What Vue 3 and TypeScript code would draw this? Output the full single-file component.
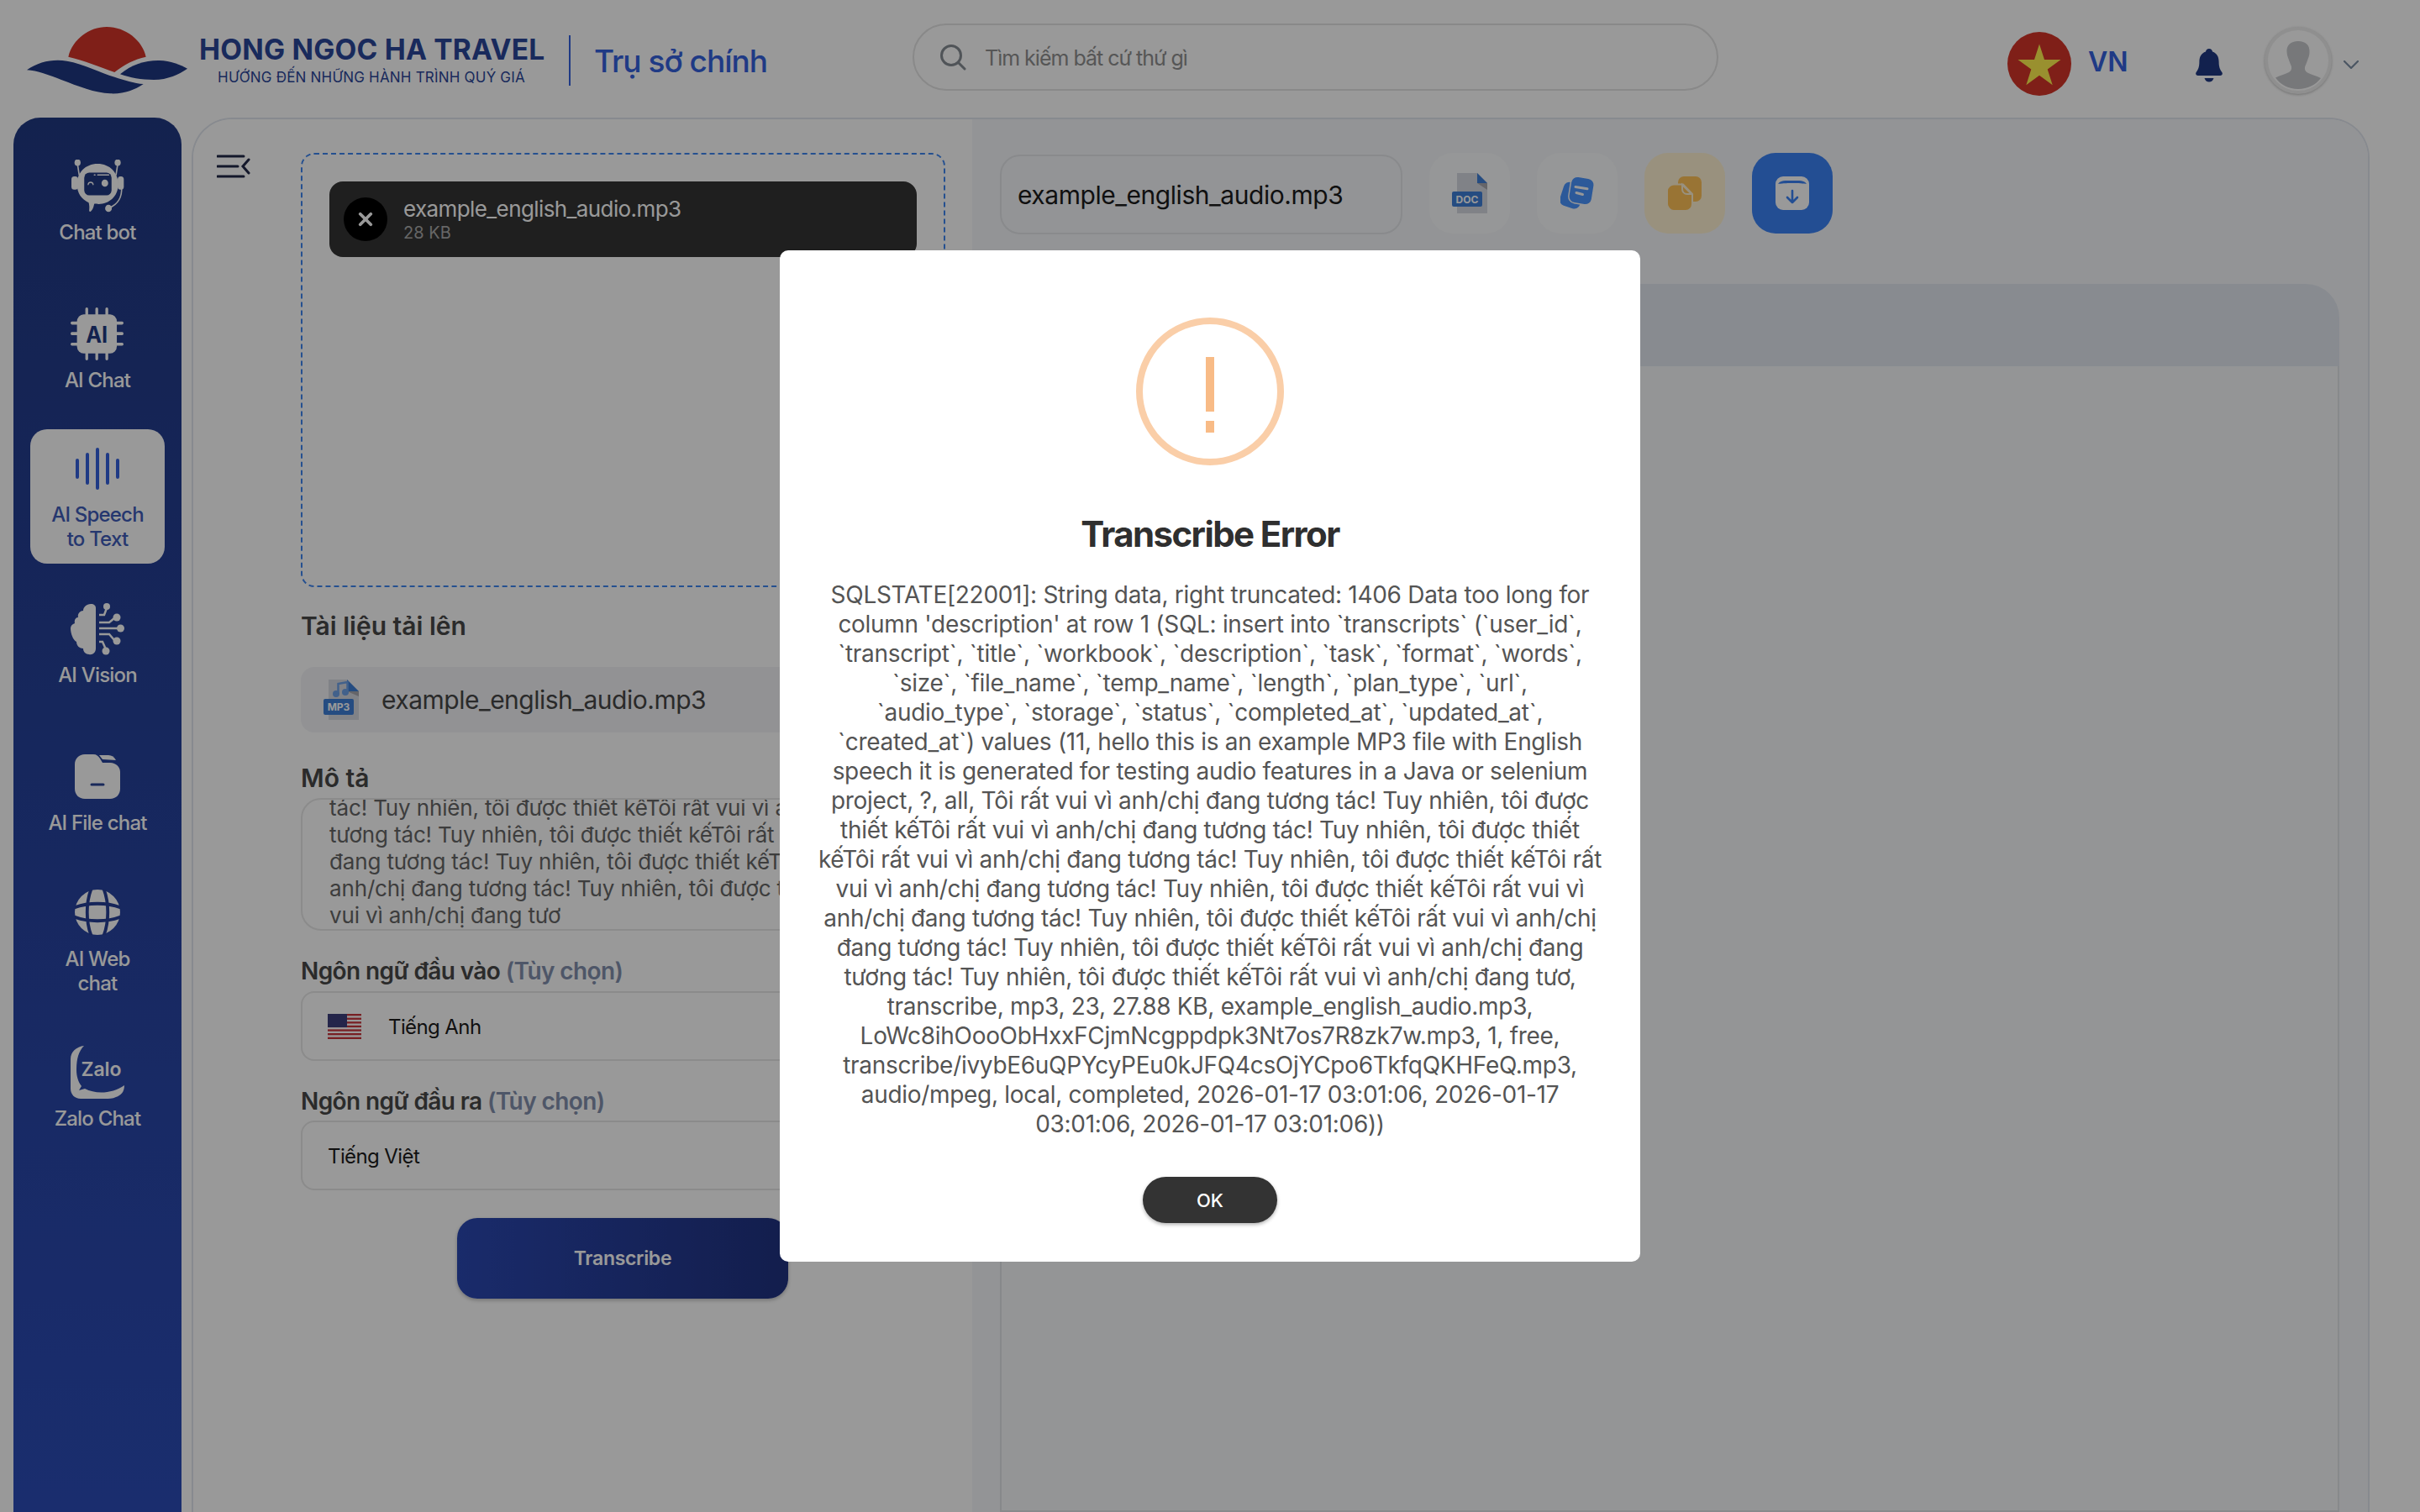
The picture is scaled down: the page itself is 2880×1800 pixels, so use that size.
<script setup lang="ts">
const errorLines: string[] = [
  "SQLSTATE[22001]: String data, right truncated: 1406 Data too long for",
  "column 'description' at row 1 (SQL: insert into `transcripts` (`user_id`,",
  "`transcript`, `title`, `workbook`, `description`, `task`, `format`, `words`,",
  "`size`, `file_name`, `temp_name`, `length`, `plan_type`, `url`,",
  "`audio_type`, `storage`, `status`, `completed_at`, `updated_at`,",
  "`created_at`) values (11, hello this is an example MP3 file with English",
  "speech it is generated for testing audio features in a Java or selenium",
  "project, ?, all, Tôi rất vui vì anh/chị đang tương tác! Tuy nhiên, tôi được",
  "thiết kếTôi rất vui vì anh/chị đang tương tác! Tuy nhiên, tôi được thiết",
  "kếTôi rất vui vì anh/chị đang tương tác! Tuy nhiên, tôi được thiết kếTôi rất",
  "vui vì anh/chị đang tương tác! Tuy nhiên, tôi được thiết kếTôi rất vui vì",
  "anh/chị đang tương tác! Tuy nhiên, tôi được thiết kếTôi rất vui vì anh/chị",
  "đang tương tác! Tuy nhiên, tôi được thiết kếTôi rất vui vì anh/chị đang",
  "tương tác! Tuy nhiên, tôi được thiết kếTôi rất vui vì anh/chị đang tươ,",
  "transcribe, mp3, 23, 27.88 KB, example_english_audio.mp3,",
  "LoWc8ihOooObHxxFCjmNcgppdpk3Nt7os7R8zk7w.mp3, 1, free,",
  "transcribe/ivybE6uQPYcyPEu0kJFQ4csOjYCpo6TkfqQKHFeQ.mp3,",
  "audio/mpeg, local, completed, 2026-01-17 03:01:06, 2026-01-17",
  "03:01:06, 2026-01-17 03:01:06))",
];

const descLines: string[] = [
  "tác! Tuy nhiên, tôi được thiết kếTôi rất vui vì anh/chị đang",
  "tương tác! Tuy nhiên, tôi được thiết kếTôi rất vui vì anh/chị",
  "đang tương tác! Tuy nhiên, tôi được thiết kếTôi rất vui vì",
  "anh/chị đang tương tác! Tuy nhiên, tôi được thiết kếTôi rất",
  "vui vì anh/chị đang tươ",
];
</script>

<template>
  <div class="page">
    <header class="header">
      <div class="brand">
        <svg class="logo" viewBox="37 36 573 240">
          <path fill="#d43528" d="M185 143C200 80 260 36 322 36C390 36 450 85 462 143C420 152 385 170 350 198C300 180 240 155 185 143Z" />
          <path fill="#1e3782" d="M37 190C80 160 130 150 180 158C240 168 300 200 350 215C385 226 420 238 453 240C420 262 385 276 335 274C280 272 220 248 160 225C115 208 75 192 37 190Z" />
          <path fill="#1e3782" d="M370 205C410 170 460 155 510 156C550 157 585 172 610 185C580 205 540 225 490 225C445 225 405 218 370 205Z" />
        </svg>
        <div class="brand-text">
          <div class="brand-name">HONG NGOC HA TRAVEL</div>
          <div class="brand-tag">HƯỚNG ĐẾN NHỮNG HÀNH TRÌNH QUÝ GIÁ</div>
        </div>
        <div class="brand-div"></div>
        <div class="brand-site">Trụ sở chính</div>
      </div>
      <div class="search">
        <svg class="search-ico" viewBox="0 0 32 32" fill="none" stroke="#858c93" stroke-width="3" stroke-linecap="round">
          <circle cx="14" cy="14" r="11.5" />
          <path d="M23 23l7 7" />
        </svg>
        <span class="search-txt">Tìm kiếm bất cứ thứ gì</span>
      </div>
      <div class="hdr-right">
        <svg class="flag" viewBox="0 0 76 76">
          <circle cx="38" cy="38" r="38" fill="#d43528" />
          <path fill="#fff04f" d="M38 14.5l6 18.6h19.5L47.7 44.6l6 18.6L38 51.7 22.3 63.2l6-18.6L12.5 33.1H32z" />
        </svg>
        <span class="vn">VN</span>
        <svg class="bell" viewBox="0 0 32 40">
          <path fill="#1e3782" d="M16 0c2.4 0 3.6 1.4 4 3.4C25.6 5.2 27.6 10 27.6 15.6c0 6.2 1.4 9.4 3.6 12.2 1.4 1.8.4 4.2-2 4.2H2.8c-2.4 0-3.4-2.4-2-4.2 2.2-2.8 3.6-6 3.6-12.2C4.4 10 6.4 5.2 12 3.4 12.4 1.4 13.6 0 16 0z" />
          <path fill="#1e3782" d="M10.5 35h11c-.8 3-3 4.6-5.500 4.600S11.300 38 10.500 35z" />
        </svg>
        <div class="avatar">
          <svg viewBox="0 0 72 72">
            <path fill="#c6c8cc" d="M36 13c9 0 14 5 13.500 13 0 4-1.500 7-2.500 10-1 3-2.500 6-3 8-.5 3 .5 5 3 6.500 4 2 10 3.500 16 6.500C57 65 47 70 36 70S15 65 9 56.500c6-3 12-4.500 16-6.500 2.500-1.500 3.500-3.500 3-6.500-.5-2-2-5-3-8-1-3-2.500-6-2.500-10C22 18 27 13 36 13z" />
          </svg>
        </div>
        <svg class="chev" viewBox="0 0 18 10" fill="none" stroke="#7d8fa5" stroke-width="2.200" stroke-linecap="round" stroke-linejoin="round">
          <path d="M1 1l8 8 8-8" />
        </svg>
      </div>
    </header>

    <div class="body">
      <nav class="sidebar">
        <div class="item n1">
          <svg class="ico i-bot" viewBox="252 112 190 176" preserveAspectRatio="none">
            <circle cx="274" cy="122" r="11" fill="#fff" />
            <circle cx="418" cy="122" r="11" fill="#fff" />
            <path fill="none" stroke="#fff" stroke-width="5" d="M274 128l6 36M418 128l-6 36M432 205c2 30-12 56-45 68" />
            <circle cx="385" cy="274" r="12" fill="#fff" />
            <rect x="252" y="168" width="24" height="44" rx="10" fill="#fff" />
            <rect x="418" y="168" width="22" height="44" rx="10" fill="#fff" />
            <path fill="#fff" d="M346 126c44 0 74 30 74 68 0 42-34 66-70 66-6 0-12 0-16-1-2 10-6 22-14 26-4 1-5-3-4-8 1-7 0-15-2-22-26-10-42-32-42-61 0-38 30-68 74-68z" />
            <rect x="298" y="155" width="98" height="76" rx="18" fill="#213983" />
            <path fill="none" stroke="#fff" stroke-width="4" stroke-linecap="round" d="M312 195c2-10 16-10 18 0M334 163h3M346 163h40" />
            <circle cx="372" cy="190" r="12" fill="#fff" />
          </svg>
          <span class="lbl">Chat bot</span>
        </div>

        <div class="item n2">
          <svg class="ico i-ai" viewBox="252 605 190 176" preserveAspectRatio="none">
            <g stroke="#fff" stroke-width="10" stroke-linecap="round">
              <path d="M310 610v25M346 610v25M382 610v25M310 750v26M346 750v26M382 750v26M257 657h25M257 692h25M257 727h25M412 657h25M412 692h25M412 727h25" />
            </g>
            <rect x="275" y="628" width="143" height="130" rx="24" fill="#fff" />
            <text x="346" y="721" text-anchor="middle" class="ai-txt">AI</text>
          </svg>
          <span class="lbl">AI Chat</span>
        </div>

        <div class="item active n3">
          <svg class="ico i-wave" viewBox="0 0 52 50" fill="none" stroke="#3461de" stroke-width="4" stroke-linecap="round">
            <path d="M2 15v20M14 8v34M26 2v46M38 8v34M50 15v20" />
          </svg>
          <span class="lbl">AI Speech<br />to Text</span>
        </div>

        <div class="item n4">
          <svg class="ico i-brain" viewBox="0 0 64 62">
            <path fill="#fff" d="M24 1C28 1 30 3 30 6V54C30 59 26 62 22 61C18 61 15 58 15 54C11 54 7 51 7 46C3 44 0 36 0 30C0 27 2 25 5 24C4 20 6 17 9 17C8 13 11 9 15 9C15 5 19 1 24 1Z" />
            <g fill="none" stroke="#fff" stroke-width="2.500">
              <path d="M34 14H40L43 6M34 23H46L52 18M34 30H58M34 37H46L52 44M34 46H38L42 55" />
            </g>
            <g fill="#fff">
              <circle cx="43" cy="4" r="4" /><circle cx="55" cy="17" r="4.500" /><circle cx="59.500" cy="30" r="4.500" />
              <circle cx="55" cy="45" r="4.500" /><circle cx="42" cy="57" r="4.500" />
            </g>
          </svg>
          <span class="lbl">AI Vision</span>
        </div>

        <div class="item n5">
          <svg class="ico i-folder" viewBox="0 0 54 53">
            <path fill="#fff" d="M0 12C0 5 5 0 12 0H22C26 0 28 2 30 5L33 10H42C49 10 54 15 54 21V41C54 48 49 53 42 53H12C5 53 0 48 0 41Z" />
            <path fill="#fff" d="M29 1H40C44 1 47 3 49 7L33 6Z" />
            <path stroke="#2a4597" stroke-width="3" stroke-linecap="round" fill="none" d="M20 36h14" />
          </svg>
          <span class="lbl">AI File chat</span>
        </div>

        <div class="item n6">
          <svg class="ico i-globe" viewBox="0 0 54 54">
            <circle cx="27" cy="27" r="27" fill="#fff" />
            <g fill="none" stroke="#263f96" stroke-width="3.800">
              <path d="M-2 22C15 15 39 15 56 22M-2 32C15 39 39 39 56 32" />
              <path d="M20 -2C13 15 13 39 20 56M34 -2C41 15 41 39 34 56" />
            </g>
          </svg>
          <span class="lbl">AI Web<br />chat</span>
        </div>

        <div class="item n7">
          <svg class="ico i-zalo" viewBox="0 0 64 65">
            <path fill="#fff" d="M16 1C9 8 7 18 7 30C7 37 9 44 13 49L10 54L17 52C30 59 50 58 64 48C64 56 60 60 54 62C50 64 46 64 40 64H12C5 64 0 59 0 52V17C0 8 7 2 16 1Z" />
            <text x="36.500" y="37" text-anchor="middle" class="zalo-txt">Zalo</text>
          </svg>
          <span class="lbl">Zalo Chat</span>
        </div>
      </nav>

      <main class="main">
        <section class="left">
          <svg class="menu" viewBox="0 0 40 28" fill="none" stroke="#222848" stroke-width="3" stroke-linecap="round">
            <path d="M1 2h31M1 14h24M1 26h31M38 6l-7 8 7 8" />
          </svg>
          <div class="form">
            <div class="drop">
              <div class="chip">
                <span class="chip-x">
                  <svg viewBox="0 0 16 16" fill="none" stroke="#fff" stroke-width="3" stroke-linecap="round"><path d="M3 3l10 10M13 3L3 13" /></svg>
                </span>
                <div class="chip-text">
                  <div class="chip-name">example_english_audio.mp3</div>
                  <div class="chip-size">28 KB</div>
                </div>
              </div>
            </div>

            <div class="label l-up">Tài liệu tải lên</div>
            <div class="upload">
              <svg class="mp3" viewBox="0 0 42 48">
                <path fill="#d5d9e2" d="M6 0h22l14 14v34H6z" />
                <path fill="#3f7fd8" d="M28 0l14 14H28z" />
                <path fill="#a9a9b0" d="M28 14h14v6z" />
                <circle cx="15" cy="17" r="4" fill="#6ea2e8" /><circle cx="26" cy="15" r="4" fill="#6ea2e8" />
                <path d="M17.500 17V5l11-2v12" fill="none" stroke="#6ea2e8" stroke-width="2.500" />
                <rect x="0" y="23" width="36" height="19" rx="2" fill="#3f7fd8" />
                <text x="18" y="37" text-anchor="middle" class="mp3-txt">MP3</text>
              </svg>
              <span class="upload-name">example_english_audio.mp3</span>
            </div>

            <div class="label l-desc">Mô tả</div>
            <div class="desc">
              <div class="desc-inner">
                <div v-for="(l, i) in descLines" :key="i">{{ l }}</div>
              </div>
            </div>

            <div class="label lang l-in">Ngôn ngữ đầu vào <span class="opt">(Tùy chọn)</span></div>
            <div class="select s-in">
              <svg class="us" viewBox="0 0 40 30">
                <rect width="40" height="30" fill="#fff" />
                <g fill="#c9363c">
                  <rect width="40" height="2.300" y="0" /><rect width="40" height="2.300" y="4.600" /><rect width="40" height="2.300" y="9.200" />
                  <rect width="40" height="2.300" y="13.800" /><rect width="40" height="2.300" y="18.400" /><rect width="40" height="2.300" y="23" /><rect width="40" height="2.300" y="27.700" />
                </g>
                <rect width="23" height="16" fill="#3c3f7c" />
              </svg>
              <span class="sel-txt">Tiếng Anh</span>
            </div>

            <div class="label lang l-out">Ngôn ngữ đầu ra <span class="opt">(Tùy chọn)</span></div>
            <div class="select s-out"><span class="sel-txt plain">Tiếng Việt</span></div>

            <button class="go" type="button">Transcribe</button>
          </div>
        </section>

        <section class="right">
          <div class="toolbar">
            <div class="fname">example_english_audio.mp3</div>
            <div class="tbtn neutral">
              <svg class="t-doc" viewBox="0 0 42 48">
                <path fill="#d5d9e2" d="M6 0h24l12 12v36H6z" />
                <path fill="#3f7fd8" d="M30 0l12 12H30z" />
                <path fill="#a9a9b0" d="M30 12h12v8z" />
                <rect x="0" y="22" width="36" height="18" rx="2" fill="#3f7fd8" />
                <text x="18" y="35.500" text-anchor="middle" class="doc-txt">DOC</text>
              </svg>
            </div>
            <div class="tbtn neutral">
              <svg class="t-note" viewBox="0 0 40 40">
                <g transform="rotate(18 13 23)"><rect x="1" y="8" width="25" height="29" rx="7" fill="#4a94ff" /></g>
                <g transform="rotate(9 25 17)"><rect x="11" y="1" width="28" height="32" rx="8" fill="#4a94ff" stroke="#fbfcfd" stroke-width="1.500" /></g>
                <path stroke="#fbfcfd" stroke-width="3" stroke-linecap="round" d="M18 12.500l14 2.200M19 19.500l7.500 2" />
              </svg>
            </div>
            <div class="tbtn warm">
              <svg class="t-copy" viewBox="0 0 40 40">
                <rect x="12" y="0" width="28" height="30" rx="7" fill="#ffc157" />
                <path fill="#ffc157" stroke="#fff2d2" stroke-width="2" d="M7 9.500H18L29 21V33C29 37 26 41 21 41H7C3 41 -1 37 -1 33V17C-1 13 3 9.500 7 9.500Z" />
                <path fill="#ffc157" stroke="#fff2d2" stroke-width="2" d="M17 10V15C17 18 19 21 23 21H28Z" />
              </svg>
            </div>
            <div class="tbtn blue">
              <svg class="t-save" viewBox="0 0 40 40">
                <rect x="0" y="0" width="40" height="40" rx="9" fill="#fff" />
                <path fill="#3b82f6" d="M3 9c2-3 5-4 9-4h16c4 0 7 1 9 4-6-1.500-28-1.500-34 0z" />
                <path fill="none" stroke="#3b82f6" stroke-width="2.600" stroke-linecap="round" stroke-linejoin="round" d="M20 17v14M14 25l6 6 6-6" />
              </svg>
            </div>
          </div>
          <div class="card">
            <div class="card-head"></div>
            <div class="card-body"></div>
          </div>
        </section>
      </main>
    </div>

    <div class="overlay">
      <div class="modal">
        <div class="warn">
          <span class="warn-bar"></span>
          <span class="warn-dot"></span>
        </div>
        <h2 class="m-title">Transcribe Error</h2>
        <div class="m-text">
          <div v-for="(l, i) in errorLines" :key="i" class="m-line">{{ l }}</div>
        </div>
        <button class="ok" type="button">OK</button>
      </div>
    </div>
  </div>
</template>

<style>
html, body { margin: 0; padding: 0; background: #fff; overflow: hidden; }
</style>

<style scoped>
.page {
  position: relative;
  width: 2880px;
  height: 1800px;
  overflow: hidden;
  background: #fff;
  font-family: Inter, "Noto Sans", sans-serif;
  display: flex;
  flex-direction: column;
}

/* header */
.header { height: 140px; flex: none; display: flex; align-items: flex-start; padding-left: 32px; box-sizing: border-box; }
.brand { width: 1054px; flex: none; display: flex; align-items: flex-start; padding-top: 32px; box-sizing: border-box; height: 140px; }
.logo { width: 191px; height: 80px; flex: none; }
.brand-text { width: 410px; margin-left: 14px; flex: none; margin-top: 8px; text-align: center; }
.brand-name { font-size: 33.5px; line-height: 38px; font-weight: 700; letter-spacing: .2px; color: #2b4699; white-space: nowrap; text-align: left; }
.brand-tag { font-size: 17px; line-height: 22px; margin-top: 3px; letter-spacing: .2px; color: #2b4699; white-space: nowrap; }
.brand-div { width: 2px; height: 60px; margin: 10px 0 0 30px; background: #3461de; flex: none; }
.brand-site { margin: 17px 0 0 28px; font-size: 37px; line-height: 48px; font-weight: 500; letter-spacing: -1px; color: #3461de; white-space: nowrap; }

.search { width: 959px; height: 80px; margin-top: 28px; flex: none; box-sizing: border-box; border: 2px solid #e4e4e4; border-radius: 40px; display: flex; align-items: center; padding-left: 30px; }
.search-ico { width: 32px; height: 32px; flex: none; }
.search-txt { margin-left: 22px; margin-top: 2px; font-size: 25px; letter-spacing: -1px; color: #8f8f8f; white-space: nowrap; }

.hdr-right { display: flex; align-items: flex-start; margin-left: 344px; }
.flag { width: 76px; height: 76px; margin-top: 38px; flex: none; }
.vn { margin: 54px 0 0 20px; font-size: 32px; line-height: 40px; font-weight: 600; color: #3461de; width: 48px; flex: none; }
.bell { width: 32px; height: 40px; margin: 58px 0 0 80px; flex: none; }
.avatar { width: 80px; height: 80px; margin: 32px 0 0 50px; flex: none; box-sizing: border-box; border: 4px solid #eeeeee; border-radius: 50%; overflow: hidden; box-shadow: 0 1px 3px rgba(0,0,0,.25); background: #fff; }
.avatar svg { width: 72px; height: 72px; display: block; }
.chev { width: 18px; height: 10px; margin: 72px 0 0 14px; flex: none; }

/* layout body */
.body { flex: 1; display: flex; min-height: 0; }

/* sidebar */
.sidebar { width: 200px; margin-left: 16px; flex: none; box-sizing: border-box; border-radius: 32px 32px 0 0; background: linear-gradient(180deg, #213983 0%, #2c4cb8 100%); display: flex; flex-direction: column; align-items: center; padding-top: 50px; }
.item { display: flex; flex-direction: column; align-items: center; color: #fff; flex: none; }
.ico { display: block; flex: none; }
.lbl { font-size: 24px; line-height: 28px; font-weight: 500; text-align: center; white-space: nowrap; letter-spacing: -.8px; margin-top: 10px; }
.i-bot { width: 63px; height: 63px; }
.i-ai { width: 63px; height: 63px; }
.i-wave { width: 52px; height: 50px; }
.i-brain { width: 64px; height: 62px; }
.i-folder { width: 54px; height: 53px; }
.i-globe { width: 54px; height: 54px; }
.i-zalo { width: 64px; height: 65px; }
.n2 { margin-top: 75px; }
.n3 { margin-top: 44px; }
.n4 { margin-top: 47px; }
.n5 { margin-top: 80px; }
.n5 .lbl { margin-top: 15px; }
.n6 { margin-top: 65px; }
.n6 .lbl { margin-top: 14px; line-height: 29px; }
.n7 { margin-top: 59px; }
.n7 .lbl { margin-top: 9px; }
.active { width: 160px; height: 160px; box-sizing: border-box; background: #fff; border-radius: 20px; padding-top: 22px; color: #3e5db9; }
.active .lbl { line-height: 29px; margin-top: 15px; }
.ai-txt { font: 700 76px Inter, sans-serif; fill: #213983; }
.zalo-txt { font: 600 23px Inter, sans-serif; fill: #fff; }

/* main panel */
.main { width: 2592px; margin-left: 12px; flex: none; box-sizing: border-box; border: 2px solid #e2e6ee; border-bottom: 0; border-radius: 48px 48px 0 0; display: flex; overflow: hidden; }
.left { width: 927px; flex: none; background: #fff; display: flex; box-sizing: border-box; }
.menu { width: 40px; height: 28px; margin: 42px 0 0 28px; flex: none; }
.form { width: 767px; margin-left: 60px; padding-top: 40px; flex: none; }
.drop { height: 517px; box-sizing: border-box; border: 2px dashed #3f86f0; border-radius: 16px; padding: 32px; }
.chip { height: 90px; width: 699px; box-sizing: border-box; border-radius: 16px; background: #343434; display: flex; align-items: center; padding-left: 17px; }
.chip-x { width: 52px; height: 52px; border-radius: 50%; background: #000; display: flex; align-items: center; justify-content: center; flex: none; }
.chip-x svg { width: 20px; height: 20px; }
.chip-text { margin-left: 19px; }
.chip-name { font-size: 26px; line-height: 32px; letter-spacing: -.6px; color: #fff; white-space: nowrap; }
.chip-size { font-size: 20px; line-height: 24px; color: #aaaaaa; }

.label { font-size: 30px; line-height: 36px; font-weight: 600; color: #484848; white-space: nowrap; }
.lang { font-size: 28px; letter-spacing: -.6px; }
.opt { color: #8390ad; }
.l-up { margin-top: 28px; }
.upload { margin-top: 31px; height: 78px; border-radius: 16px; background: #f3f4f7; display: flex; align-items: center; padding-left: 27px; }
.mp3 { width: 42px; height: 48px; flex: none; }
.upload-name { margin-left: 27px; font-size: 30px; letter-spacing: -.5px; color: #474747; white-space: nowrap; }
.mp3-txt { font: 700 12px Inter, sans-serif; fill: #fff; }
.l-desc { margin-top: 36px; }
.desc { margin-top: 6px; height: 158px; box-sizing: border-box; border: 2px solid #e8e8e8; border-radius: 24px; overflow: hidden; padding: 0 32px; }
.desc-inner { margin-top: -6px; font-size: 26px; line-height: 32px; letter-spacing: -.15px; color: #666; white-space: nowrap; }
.l-in { margin-top: 30px; }
.select { height: 83px; box-sizing: border-box; border: 2px solid #e8e8e8; border-radius: 16px; display: flex; align-items: center; padding-left: 30px; }
.s-in { margin-top: 6px; }
.l-out { margin-top: 30px; }
.s-out { margin-top: 5px; }
.us { width: 40px; height: 30px; flex: none; }
.sel-txt { margin-left: 32px; margin-top: 2px; font-size: 24px; letter-spacing: -.6px; color: #1c1c1c; white-space: nowrap; }
.sel-txt.plain { margin-left: 0; }
.go { display: block; margin: 33px 0 0 186px; width: 394px; height: 96px; border: 0; border-radius: 24px; background: linear-gradient(90deg, #2b48b2, #203280); color: #fff; font: 600 23px Inter, sans-serif; letter-spacing: -.3px; box-shadow: 0 2px 4px rgba(0,0,0,.25); }

/* right */
.right { flex: 1; min-width: 0; background: #f5f7fa; padding: 40px 34px 0 33px; display: flex; flex-direction: column; box-sizing: border-box; }
.toolbar { display: flex; gap: 32px; flex: none; align-items: flex-start; }
.fname { width: 479px; height: 95px; margin-top: 2px; box-sizing: border-box; border: 2px solid #e4e6ea; border-radius: 24px; display: flex; align-items: center; padding: 0 0 0 19px; font-size: 30px; letter-spacing: -.45px; color: #1c1c1c; white-space: nowrap; }
.tbtn { width: 96px; height: 96px; border-radius: 28px; display: flex; align-items: center; justify-content: center; flex: none; }
.neutral { background: #fbfcfd; }
.warm { background: #fff2d2; }
.blue { background: #3b82f6; }
.t-doc { width: 42px; height: 48px; }
.doc-txt { font: 700 12px Inter, sans-serif; fill: #fff; }
.t-note { width: 40px; height: 40px; }
.t-copy { width: 40px; height: 40px; }
.t-save { width: 40px; height: 40px; }
.card { margin-top: 59px; flex: 1; display: flex; flex-direction: column; min-height: 0; }
.card-head { height: 98px; flex: none; background: #e3e8f0; border-radius: 40px 40px 0 0; }
.card-body { flex: 1; background: #f7f8fb; border: 2px solid #e2e4e8; border-top: 0; }

/* overlay */
.overlay { position: absolute; inset: 0; background: rgba(0,0,0,.4); display: flex; align-items: center; justify-content: center; }
.modal { width: 1024px; box-sizing: border-box; background: #fff; border-radius: 10px; padding: 80px 0 46px; display: flex; flex-direction: column; align-items: center; }
.warn { width: 176px; height: 176px; box-sizing: border-box; border: 8px solid #facea8; border-radius: 50%; display: flex; flex-direction: column; align-items: center; padding-top: 39px; flex: none; }
.warn-bar { width: 10px; height: 65px; background: #f8bb86; display: block; }
.warn-dot { width: 10px; height: 14px; margin-top: 11px; background: #f8bb86; display: block; }
.m-title { margin: 57px 0 0; font-size: 42px; line-height: 50px; font-weight: 700; color: #2f2f2f; white-space: nowrap; letter-spacing: -1.6px; }
.m-text { margin-top: 29.5px; text-align: center; font-size: 28px; line-height: 35px; letter-spacing: -.3px; color: #545454; white-space: nowrap; }
.ok { margin-top: 45.5px; width: 160px; height: 55px; border: 0; border-radius: 28px; background: #333; color: #fff; font: 500 22px Inter, sans-serif; box-shadow: 0 2px 4px rgba(0,0,0,.3); flex: none; }
</style>
